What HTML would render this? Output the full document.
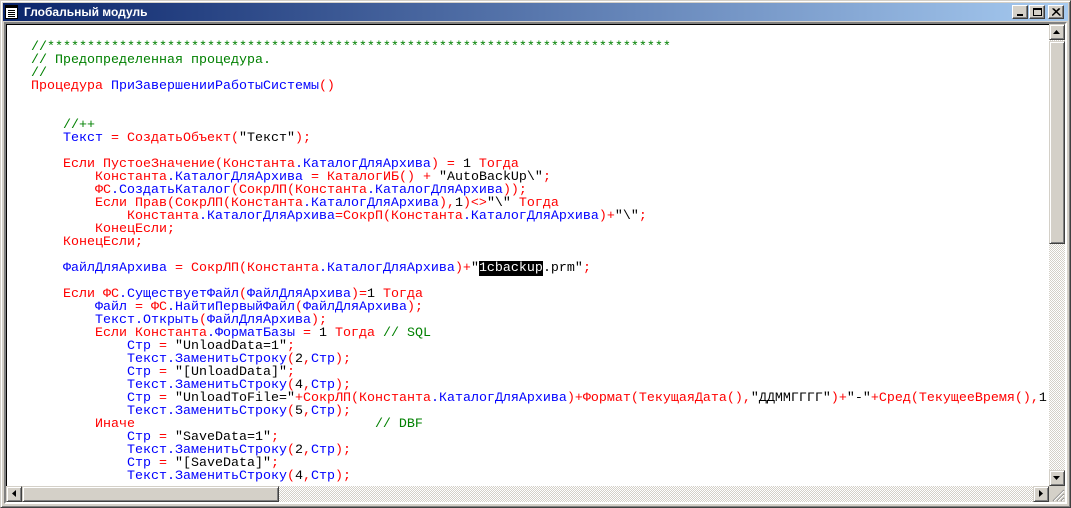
<!DOCTYPE html>
<html><head><meta charset="utf-8"><style>
*{margin:0;padding:0;box-sizing:border-box}
body{width:1071px;height:508px;background:#d4d0c8;position:relative;overflow:hidden;font-family:"Liberation Sans",sans-serif}
.frame{position:absolute;left:0;top:0;width:1071px;height:508px;border:1px solid;border-color:#d4d0c8 #404040 #404040 #d4d0c8;box-shadow:inset 1px 1px #fff,inset -1px -1px #808080}
.title{position:absolute;left:3px;top:3px;width:1065px;height:18px;background:linear-gradient(to right,#0a246a,#a6caf0)}
.title span{position:absolute;left:21px;top:2px;color:#fff;font-weight:bold;font-size:12px}
.btn{position:absolute;top:5px;width:16px;height:14px;background:#d4d0c8;border:1px solid;border-color:#fff #404040 #404040 #fff;box-shadow:inset -1px -1px #808080}
.client{position:absolute;left:4px;top:22px;width:1063px;height:482px;border:2px solid;border-color:#808080 #fff #fff #808080;background:#fff}
.client::before{content:"";position:absolute;left:0;top:0;right:0;bottom:0;border:1px solid;border-color:#000 #d4d0c8 #d4d0c8 #000;pointer-events:none}
pre{position:absolute;left:25px;top:17px;font-family:"Liberation Mono","Noto Sans CJK SC",monospace;font-size:13.33px;line-height:13px;color:#f00;white-space:pre}
.b{color:#00f}.k{color:#000}.g{color:#008000}.h{background:#000;color:#fff}
.vs{position:absolute;left:1043px;top:0px;width:16px;height:462px;background:repeating-conic-gradient(#d4d0c8 0 25%,#fff 0 50%) 0 0/2px 2px}
.hs{position:absolute;left:0;top:462px;width:1043px;height:16px;background:repeating-conic-gradient(#d4d0c8 0 25%,#fff 0 50%) 0 0/2px 2px}
.sb{position:absolute;background:#d4d0c8;border:1px solid;border-color:#d4d0c8 #404040 #404040 #d4d0c8;box-shadow:inset 1px 1px #fff,inset -1px -1px #808080}
.grip{position:absolute;left:1043px;top:462px;width:16px;height:16px;background:#d4d0c8}
</style></head><body>
<div class="frame"></div>
<div class="title">
<svg style="position:absolute;left:2px;top:2px" width="13" height="14"><rect x="0.5" y="0.5" width="12" height="13" fill="#fff" stroke="#000"/><rect x="1" y="1" width="11" height="2" fill="#000"/><g stroke="#000"><path d="M3 5.5h7M3 7.5h7M3 9.5h7M3 11.5h7"/></g></svg>
<span>Глобальный модуль</span>
</div>
<div class="btn" style="left:1012px"><div style="position:absolute;left:4px;top:8px;width:6px;height:2px;background:#000"></div></div>
<div class="btn" style="left:1029px"><div style="position:absolute;left:3px;top:2px;width:9px;height:8px;border:1px solid #000;border-top-width:2px"></div></div>
<div class="btn" style="left:1048px"><svg style="position:absolute;left:3px;top:2px" width="9" height="8"><path d="M0.5 0.5L8 7.5M8 0.5L0.5 7.5M1.5 0.5L8.5 7.5M7 0.5L0 7.5" stroke="#000" stroke-width="1"/></svg></div>
<div class="client">
<pre><span class="g">//******************************************************************************</span>
<span class="g">// Предопределенная процедура.</span>
<span class="g">//</span>
Процедура <span class="b">ПриЗавершенииРаботыСистемы</span>()


    <span class="g">//++</span>
    <span class="b">Текст</span> = СоздатьОбъект(<span class="k">"Текст"</span>);

    Если ПустоеЗначение(Константа<span class="b">.КаталогДляАрхива</span>) = <span class="k">1</span> Тогда
        Константа<span class="b">.КаталогДляАрхива</span> = КаталогИБ() + <span class="k">"AutoBackUp\"</span>;
        ФС<span class="b">.СоздатьКаталог</span>(СокрЛП(Константа<span class="b">.КаталогДляАрхива</span>));
        Если Прав(СокрЛП(Константа<span class="b">.КаталогДляАрхива</span>),<span class="k">1</span>)&lt;&gt;<span class="k">"\"</span> Тогда
            Константа<span class="b">.КаталогДляАрхива</span>=СокрП(Константа<span class="b">.КаталогДляАрхива</span>)+<span class="k">"\"</span>;
        КонецЕсли;
    КонецЕсли;

    <span class="b">ФайлДляАрхива</span> = СокрЛП(Константа<span class="b">.КаталогДляАрхива</span>)+<span class="k">"<span class="h">1cbackup</span>.prm"</span>;

    Если ФС<span class="b">.СуществуетФайл</span>(<span class="b">ФайлДляАрхива</span>)=<span class="k">1</span> Тогда
        <span class="b">Файл</span> = ФС<span class="b">.НайтиПервыйФайл</span>(<span class="b">ФайлДляАрхива</span>);
        <span class="b">Текст.Открыть</span>(<span class="b">ФайлДляАрхива</span>);
        Если Константа<span class="b">.ФорматБазы</span> = <span class="k">1</span> Тогда <span class="g">// SQL</span>
            <span class="b">Стр</span> = <span class="k">"UnloadData=1"</span>;
            <span class="b">Текст.ЗаменитьСтроку</span>(<span class="k">2</span>,<span class="b">Стр</span>);
            <span class="b">Стр</span> = <span class="k">"[UnloadData]"</span>;
            <span class="b">Текст.ЗаменитьСтроку</span>(<span class="k">4</span>,<span class="b">Стр</span>);
            <span class="b">Стр</span> = <span class="k">"UnloadToFile="</span>+СокрЛП(Константа<span class="b">.КаталогДляАрхива</span>)+Формат(ТекущаяДата(),<span class="k">"ДДММГГГГ"</span>)+<span class="k">"-"</span>+Сред(ТекущееВремя(),<span class="k">1</span>
            <span class="b">Текст.ЗаменитьСтроку</span>(<span class="k">5</span>,<span class="b">Стр</span>);
        Иначе                              <span class="g">// DBF</span>
            <span class="b">Стр</span> = <span class="k">"SaveData=1"</span>;
            <span class="b">Текст.ЗаменитьСтроку</span>(<span class="k">2</span>,<span class="b">Стр</span>);
            <span class="b">Стр</span> = <span class="k">"[SaveData]"</span>;
            <span class="b">Текст.ЗаменитьСтроку</span>(<span class="k">4</span>,<span class="b">Стр</span>);</pre>
<div class="vs">
 <div class="sb" style="left:0;top:0;width:16px;height:16px"><svg style="position:absolute;left:3px;top:5px" width="8" height="4"><path d="M3.5 0L7 4H0Z" fill="#000"/></svg></div>
 <div class="sb" style="left:0;top:17px;width:16px;height:203px"></div>
 <div class="sb" style="left:0;top:446px;width:16px;height:16px"><svg style="position:absolute;left:3px;top:5px" width="8" height="4"><path d="M0 0H7L3.5 4Z" fill="#000"/></svg></div>
</div>
<div class="hs">
 <div class="sb" style="left:0;top:0;width:16px;height:16px"><svg style="position:absolute;left:5px;top:3px" width="4" height="8"><path d="M4 0V7L0 3.5Z" fill="#000"/></svg></div>
 <div class="sb" style="left:16px;top:0;width:257px;height:16px"></div>
 <div class="sb" style="left:1027px;top:0;width:16px;height:16px"><svg style="position:absolute;left:5px;top:3px" width="4" height="8"><path d="M0 0V7L4 3.5Z" fill="#000"/></svg></div>
</div>
<div class="grip"><svg width="16" height="16"><path d="M15 4L4 15M15 8L8 15M15 12L12 15" stroke="#808080" stroke-width="1.2"/><path d="M15 5L5 15M15 9L9 15M15 13L13 15" stroke="#fff" stroke-width="1"/></svg></div>
</div>
</body></html>
